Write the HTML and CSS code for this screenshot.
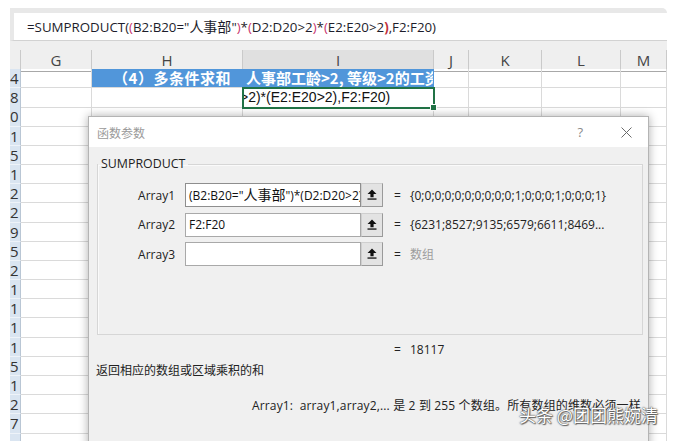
FILE: index.html
```html
<!DOCTYPE html>
<html lang="zh-CN">
<head>
<meta charset="utf-8">
<title>函数参数</title>
<link rel="stylesheet" href="styles.css">
</head>
<body>
<div class="app">
  <div class="fbar">=SUMPRODUCT(<span class="p2">(</span>B2:B20="<span class="cjk">人事部</span>"<span class="p2">)</span>*<span class="p2">(</span>D2:D20&gt;2<span class="p2">)</span>*<span class="p2">(</span>E2:E20&gt;2<span class="p3">)</span>,F2:F20)</div>
  <div class="hgap"></div>
  <div class="sheet">
    <div class="hdr">
      <div class="hc"></div><div class="hc">G</div><div class="hc">H</div><div class="hc hsel">I</div><div class="hc">J</div><div class="hc">K</div><div class="hc">L</div><div class="hc">M</div>
    </div>
    <div class="row"><div class="c rh">4</div><div class="c"></div><div class="c blue bc">（4）多条件求和</div><div class="c blue bl">人事部工龄&gt;2, 等级&gt;2的工资</div><div class="c"></div><div class="c"></div><div class="c"></div><div class="c"></div></div>
    <div class="row"><div class="c rh">8</div><div class="c"></div><div class="c"></div><div class="c active"><span class="edit">&gt;2)*(E2:E20&gt;2),F2:F20)</span></div><div class="c"></div><div class="c"></div><div class="c"></div><div class="c"></div></div>
    <div class="row"><div class="c rh">0</div><div class="c"></div><div class="c"></div><div class="c"></div><div class="c"></div><div class="c"></div><div class="c"></div><div class="c"></div></div>
    <div class="row"><div class="c rh">1</div><div class="c"></div><div class="c"></div><div class="c"></div><div class="c"></div><div class="c"></div><div class="c"></div><div class="c"></div></div>
    <div class="row"><div class="c rh">5</div><div class="c"></div><div class="c"></div><div class="c"></div><div class="c"></div><div class="c"></div><div class="c"></div><div class="c"></div></div>
    <div class="row"><div class="c rh">1</div><div class="c"></div><div class="c"></div><div class="c"></div><div class="c"></div><div class="c"></div><div class="c"></div><div class="c"></div></div>
    <div class="row"><div class="c rh">2</div><div class="c"></div><div class="c"></div><div class="c"></div><div class="c"></div><div class="c"></div><div class="c"></div><div class="c"></div></div>
    <div class="row"><div class="c rh">2</div><div class="c"></div><div class="c"></div><div class="c"></div><div class="c"></div><div class="c"></div><div class="c"></div><div class="c"></div></div>
    <div class="row"><div class="c rh">9</div><div class="c"></div><div class="c"></div><div class="c"></div><div class="c"></div><div class="c"></div><div class="c"></div><div class="c"></div></div>
    <div class="row"><div class="c rh">5</div><div class="c"></div><div class="c"></div><div class="c"></div><div class="c"></div><div class="c"></div><div class="c"></div><div class="c"></div></div>
    <div class="row"><div class="c rh">2</div><div class="c"></div><div class="c"></div><div class="c"></div><div class="c"></div><div class="c"></div><div class="c"></div><div class="c"></div></div>
    <div class="row"><div class="c rh">1</div><div class="c"></div><div class="c"></div><div class="c"></div><div class="c"></div><div class="c"></div><div class="c"></div><div class="c"></div></div>
    <div class="row"><div class="c rh">1</div><div class="c"></div><div class="c"></div><div class="c"></div><div class="c"></div><div class="c"></div><div class="c"></div><div class="c"></div></div>
    <div class="row"><div class="c rh">1</div><div class="c"></div><div class="c"></div><div class="c"></div><div class="c"></div><div class="c"></div><div class="c"></div><div class="c"></div></div>
    <div class="row"><div class="c rh">1</div><div class="c"></div><div class="c"></div><div class="c"></div><div class="c"></div><div class="c"></div><div class="c"></div><div class="c"></div></div>
    <div class="row"><div class="c rh">5</div><div class="c"></div><div class="c"></div><div class="c"></div><div class="c"></div><div class="c"></div><div class="c"></div><div class="c"></div></div>
    <div class="row"><div class="c rh">1</div><div class="c"></div><div class="c"></div><div class="c"></div><div class="c"></div><div class="c"></div><div class="c"></div><div class="c"></div></div>
    <div class="row"><div class="c rh">2</div><div class="c"></div><div class="c"></div><div class="c"></div><div class="c"></div><div class="c"></div><div class="c"></div><div class="c"></div></div>
    <div class="row"><div class="c rh">7</div><div class="c"></div><div class="c"></div><div class="c"></div><div class="c"></div><div class="c"></div><div class="c"></div><div class="c"></div></div>
    <div class="row"><div class="c rh"></div><div class="c"></div><div class="c"></div><div class="c"></div><div class="c"></div><div class="c"></div><div class="c"></div><div class="c"></div></div>
  </div>
</div>

<div class="dialog">
  <div class="title">
    <span class="ttext">函数参数</span>
    <span class="help">?</span>
    <svg class="close" width="11" height="11" viewBox="0 0 11 11"><path d="M0.5 0.5 L10.5 10.5 M10.5 0.5 L0.5 10.5" stroke="#6a6a6a" stroke-width="1" fill="none"/></svg>
  </div>
  <div class="body">
    <fieldset class="group">
      <legend>SUMPRODUCT</legend>
      <div class="args">
        <div class="arg">
          <span class="lbl">Array1</span>
          <span class="inp inp-focus">(B2:B20="<span class="cjk">人事部</span>")*(D2:D20&gt;2)*(E2:E20&gt;2)</span>
          <span class="btn"><svg width="10" height="11" viewBox="0 0 10 11"><path d="M5 0.5 L9.5 5 H6.6 V8.2 H3.4 V5 H0.5 Z" fill="#111"/><rect x="0.5" y="9.4" width="9" height="1.3" fill="#111"/></svg></span>
          <span class="eq">=</span>
          <span class="res">{0;0;0;0;0;0;0;0;0;0;1;0;0;0;1;0;0;0;1}</span>
        </div>
        <div class="arg">
          <span class="lbl">Array2</span>
          <span class="inp">F2:F20</span>
          <span class="btn"><svg width="10" height="11" viewBox="0 0 10 11"><path d="M5 0.5 L9.5 5 H6.6 V8.2 H3.4 V5 H0.5 Z" fill="#111"/><rect x="0.5" y="9.4" width="9" height="1.3" fill="#111"/></svg></span>
          <span class="eq">=</span>
          <span class="res">{6231;8527;9135;6579;6611;8469...</span>
        </div>
        <div class="arg">
          <span class="lbl">Array3</span>
          <span class="inp"></span>
          <span class="btn"><svg width="10" height="11" viewBox="0 0 10 11"><path d="M5 0.5 L9.5 5 H6.6 V8.2 H3.4 V5 H0.5 Z" fill="#111"/><rect x="0.5" y="9.4" width="9" height="1.3" fill="#111"/></svg></span>
          <span class="eq">=</span>
          <span class="res muted">数组</span>
        </div>
      </div>
    </fieldset>
    <div class="total"><span class="eq">=</span><span class="res">18117</span></div>
    <div class="desc">返回相应的数组或区域乘积的和</div>
    <div class="help-line">Array1:&nbsp;&nbsp;array1,array2,... 是 2 到 255 个数组。所有数组的维数必须一样</div>
  </div>
</div>

<div class="watermark">头条 @团团熊婉清</div>
</body>
</html>
```

FILE: styles.css
```css
html, body {
  margin: 0;
  padding: 0;
}
body {
  position: relative;
  width: 679px;
  height: 441px;
  overflow: hidden;
  background: #ffffff;
  font-family: "Open Sans", "Noto Sans CJK SC", sans-serif;
  color: #222;
}

.app {
  padding: 8px 12px 0 10px;
}

/* formula bar */
.fbar {
  height: 27px;
  line-height: 27px;
  border-top: 5px solid #e8e8e8;
  border-left: 4px solid #e8e8e8;
  border-bottom: 1px solid #d2d2d2;
  border-top-right-radius: 5px;
  background: #fff;
  padding-left: 13px;
  font-size: 13.3px;
  color: #1d1d2b;
  white-space: nowrap;
  overflow: hidden;
}
.fbar .cjk {
  font-size: 14px;
}
.fbar .p2 {
  color: #c8336b;
}
.fbar .p3 {
  color: #c0303a;
  font-weight: 700;
}

.hgap {
  height: 9px;
  background: #efefef;
}

/* sheet grid */
.hdr, .row {
  display: grid;
  grid-template-columns: 11px 71px 151px 191px 35px 73px 79px 46px;
}
.hdr {
  height: 19px;
  background: #efefef;
}
.hc {
  box-sizing: border-box;
  border-right: 1px solid #cacaca;
  border-bottom: 1px solid #a8a8a8;
  text-align: center;
  font-size: 15px;
  line-height: 20px;
  color: #444;
}
.hc.hsel {
  background: #e0e0e0;
  border-bottom: 2px solid #217346;
}

.row {
  height: 19.2px;
}
.c {
  box-sizing: border-box;
  border-right: 1px solid #dadada;
  border-bottom: 1px solid #dadada;
  overflow: hidden;
  white-space: nowrap;
}
.c.rh {
  background: #dae5f1;
  border-bottom: 1px solid #eef3f9;
  border-right: 1px solid #b9c6d4;
  font-size: 15px;
  line-height: 19px;
  color: #333;
}
.c.blue {
  background: #5196da;
  border-right-color: #5196da;
  color: #fff;
  font-weight: 700;
  font-size: 15px;
  line-height: 18px;
  font-family: "Noto Sans CJK SC", sans-serif;
}
.c.bc {
  text-align: center;
  padding-left: 10px;
  letter-spacing: 0.5px;
}
.c.bl {
  padding-left: 3px;
}
.c.active {
  position: relative;
  overflow: visible;
  outline: 2px solid #217346;
  outline-offset: -1px;
  z-index: 1;
  font-family: "Liberation Sans", sans-serif;
  font-size: 14px;
  line-height: 19px;
  color: #111;
}
.c.active::after {
  content: "";
  position: absolute;
  right: -4px;
  bottom: -4px;
  width: 5px;
  height: 5px;
  background: #217346;
  border: 1px solid #fff;
}
.edit {
  display: block;
  overflow: hidden;
  text-indent: -3px;
}

/* dialog */
.dialog {
  position: absolute;
  left: 88px;
  top: 116px;
  width: 561px;
  height: 340px;
  box-sizing: border-box;
  border: 1px solid #b4b4b4;
  background: #f0f0f0;
  box-shadow: 0 0 9px rgba(0, 0, 0, 0.32);
  z-index: 5;
}
.title {
  height: 30px;
  background: #fff;
  display: flex;
  align-items: center;
  padding-left: 8px;
}
.ttext {
  font-size: 12px;
  color: #9a9a9a;
  font-family: "Noto Sans CJK SC", sans-serif;
}
.help {
  margin-left: auto;
  margin-right: 38px;
  font-size: 13px;
  color: #8a8a8a;
}
.close {
  margin-right: 16px;
}

.body {
  padding: 0 5px 0 8px;
  font-size: 12px;
}
.group {
  margin: 9px 0 0 0;
  padding: 0;
  height: 179px;
  box-sizing: border-box;
  border: 1px solid #d6d6d6;
  box-shadow: inset 1px 1px 0 #fafafa;
  min-width: 0;
}
.group legend {
  padding: 0 3px;
  font-size: 12.4px;
  line-height: 16px;
  color: #222;
}
.args {
  padding-top: 11px;
  display: flex;
  flex-direction: column;
  gap: 5.5px;
}
.arg {
  display: flex;
  align-items: center;
  height: 24px;
}
.lbl {
  width: 77px;
  text-align: right;
  margin-right: 10px;
  font-size: 12px;
  color: #222;
}
.inp {
  box-sizing: border-box;
  width: 176px;
  height: 24px;
  border: 1px solid #a9a9a9;
  background: #fff;
  padding-left: 3px;
  line-height: 22px;
  font-size: 12px;
  white-space: nowrap;
  overflow: hidden;
  color: #111;
}
.inp .cjk {
  font-size: 14px;
}
.inp-focus {
  border-color: #8e8e8e;
}
.btn {
  box-sizing: border-box;
  width: 22px;
  height: 24px;
  background: #e3e3e3;
  border: 1px solid;
  border-color: #cfcfcf #9a9a9a #9a9a9a #cfcfcf;
  display: flex;
  align-items: flex-start;
  justify-content: center;
  padding-top: 5px;
}
.eq {
  width: 16px;
  margin-left: 11px;
  font-size: 12px;
  color: #222;
}
.res {
  font-size: 12px;
  color: #222;
  white-space: nowrap;
}
.res.muted {
  color: #9d9d9d;
}
.total {
  display: flex;
  margin: 7px 0 0 286px;
  line-height: 16px;
}
.desc {
  margin: 5px 0 0 -1px;
  line-height: 16px;
  font-size: 12px;
  color: #222;
}
.help-line {
  margin: 19px 0 0 155px;
  line-height: 16px;
  font-size: 12px;
  letter-spacing: 0.15px;
  color: #222;
  white-space: nowrap;
}

.watermark {
  position: absolute;
  left: 519px;
  top: 404px;
  z-index: 6;
  font-family: "Noto Sans CJK SC", sans-serif;
  font-size: 17px;
  line-height: 22px;
  color: #fff;
  white-space: nowrap;
  text-shadow: 0 0 1px #444, 0 0 2px #555, 1px 1px 1px #666;
}
```
